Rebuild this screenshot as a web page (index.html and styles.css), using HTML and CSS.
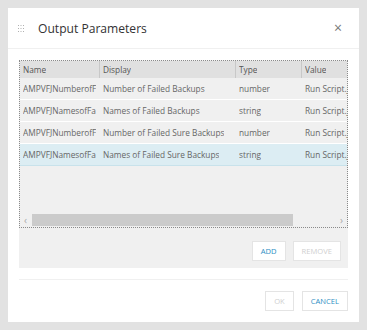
FILE: index.html
```html
<!DOCTYPE html>
<html lang="en">
<head>
  <meta charset="UTF-8" />
  <title>Output Parameters</title>
  <link rel="stylesheet" href="styles.css">
</head>
<body>
  <div class="dialog">
    <div class="dialog-header">
      <svg class="grip" width="6" height="7" viewBox="0 0 6 7">
        <rect x="0" y="0" width="1" height="1"/><rect x="2.5" y="0" width="1" height="1"/><rect x="5" y="0" width="1" height="1"/>
        <rect x="0" y="3" width="1" height="1"/><rect x="2.5" y="3" width="1" height="1"/><rect x="5" y="3" width="1" height="1"/>
        <rect x="0" y="6" width="1" height="1"/><rect x="2.5" y="6" width="1" height="1"/><rect x="5" y="6" width="1" height="1"/>
      </svg>
      <span class="title">Output Parameters</span>
      <span class="close">&#215;</span>
    </div>

    <div class="dialog-body">
      <div class="panel">
        <div class="grid">
          <div class="grid-viewport">
            <div class="row head">
              <div class="cell c-name"><span>Name</span></div>
              <div class="cell c-display"><span>Display</span></div>
              <div class="cell c-type"><span>Type</span></div>
              <div class="cell c-value"><span>Value</span></div>
            </div>
            <div class="row">
              <div class="cell c-name"><span>AMPVFJNumberofF</span></div>
              <div class="cell c-display"><span>Number of Failed Backups</span></div>
              <div class="cell c-type"><span>number</span></div>
              <div class="cell c-value"><span>Run Script.j</span></div>
            </div>
            <div class="row">
              <div class="cell c-name"><span>AMPVFJNamesofFa</span></div>
              <div class="cell c-display"><span>Names of Failed Backups</span></div>
              <div class="cell c-type"><span>string</span></div>
              <div class="cell c-value"><span>Run Script.j</span></div>
            </div>
            <div class="row">
              <div class="cell c-name"><span>AMPVFJNumberofF</span></div>
              <div class="cell c-display"><span>Number of Failed Sure Backups</span></div>
              <div class="cell c-type"><span>number</span></div>
              <div class="cell c-value"><span>Run Script.j</span></div>
            </div>
            <div class="row selected">
              <div class="cell c-name"><span>AMPVFJNamesofFa</span></div>
              <div class="cell c-display"><span>Names of Failed Sure Backups</span></div>
              <div class="cell c-type"><span>string</span></div>
              <div class="cell c-value"><span>Run Script.j</span></div>
            </div>
          </div>
          <div class="hscroll">
            <span class="arrow">&#8249;</span>
            <div class="track"><div class="thumb"></div></div>
            <span class="arrow">&#8250;</span>
          </div>
        </div>
        <div class="panel-actions">
          <button class="btn primary">ADD</button>
          <button class="btn disabled">REMOVE</button>
        </div>
      </div>
    </div>

    <div class="dialog-footer">
      <button class="btn disabled">OK</button>
      <button class="btn primary">CANCEL</button>
    </div>
  </div>
</body>
</html>
```

FILE: styles.css
```css
body {
  margin: 0;
  padding: 8px;
  background: #e2e2e2;
  font-family: "Open Sans", "Noto Sans", sans-serif;
  color: #555;
}
.dialog {
  width: 351px;
  height: 314px;
  background: #fff;
  display: flex;
  flex-direction: column;
}
.dialog-header {
  height: 40px;
  display: flex;
  align-items: center;
  padding: 0 17px 0 10px;
  border-bottom: 1px solid #f0f0f0;
}
.grip {
  fill: #b0b0b0;
  margin-right: 14px;
}
.title {
  flex: 1;
  font-size: 12.1px;
  color: #333;
}
.close {
  font-size: 14px;
  color: #777;
  line-height: 1;
}
.dialog-body {
  padding: 11px 11px 0 11px;
}
.panel {
  background: #f0f0f0;
  height: 208px;
  display: flex;
  flex-direction: column;
}
.grid {
  height: 168px;
  border: 1px dotted #8a8a8a;
  box-sizing: border-box;
  display: flex;
  flex-direction: column;
  overflow: hidden;
}
.grid-viewport {
  flex: 1;
  overflow: hidden;
}
.row {
  display: flex;
  height: 22px;
  border-bottom: 1px solid #fff;
  box-sizing: border-box;
  font-size: 8.3px;
  color: #666;
  white-space: nowrap;
}
.row.head {
  height: 17px;
  background: #e0e0e0;
  border-bottom: none;
  color: #555;
}
.row.selected {
  background: #dcedf3;
  border-bottom: 1px solid #c8e2eb;
}
.cell {
  display: flex;
  align-items: center;
  padding: 0 3px;
  overflow: hidden;
  box-sizing: border-box;
  flex: none;
}
.cell span {
  overflow: hidden;
}
.head .cell {
  border-right: 1px solid #c8c8c8;
}
.head .c-value {
  border-right: none;
}
.c-name { width: 80px; }
.c-display { width: 136px; }
.c-type { width: 66px; }
.c-value { width: 60px; }
.hscroll {
  height: 12px;
  display: flex;
  align-items: center;
  margin-bottom: 1px;
}
.arrow {
  width: 11px;
  text-align: center;
  font-size: 10px;
  color: #aaa;
  line-height: 12px;
}
.track {
  flex: 1;
  height: 12px;
}
.thumb {
  width: 261px;
  height: 12px;
  background: #cbcbcb;
  margin-left: 1px;
}
.panel-actions {
  flex: 1;
  display: flex;
  justify-content: flex-end;
  align-items: center;
  gap: 7px;
  padding: 6px 7px 0 0;
}
.btn {
  font-family: "Open Sans", "Noto Sans", sans-serif;
  font-size: 7.6px;
  background: #fff;
  border: 1px solid #e4e4e4;
  height: 20px;
  padding: 0 8px;
  cursor: pointer;
}
.btn.primary {
  color: #2f8fc4;
}
.btn.disabled {
  color: #cfcfcf;
}
.dialog-footer {
  margin: 11px 11px 0 11px;
  border-top: 1px solid #f0f0f0;
  display: flex;
  justify-content: flex-end;
  gap: 8px;
  padding-top: 11px;
}
```
